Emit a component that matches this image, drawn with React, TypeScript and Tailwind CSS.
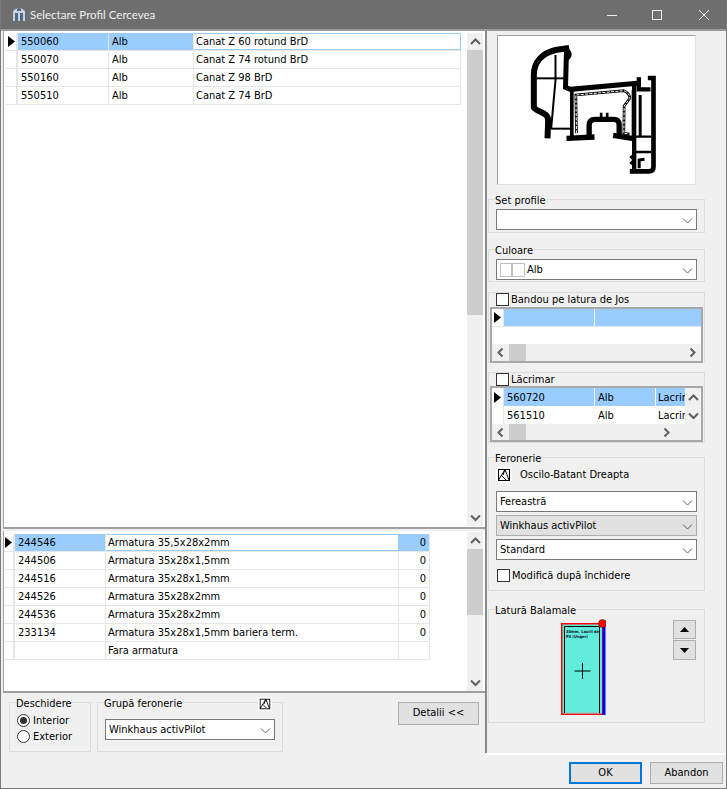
import type { ReactNode } from "react";

const font = { fontFamily: '"DejaVu Sans Condensed", "Noto Sans", sans-serif' };
const titleFont = { fontFamily: 'Lato, "Open Sans", sans-serif' };

const profiles = [
  { code: "550060", color: "Alb", name: "Canat Z 60 rotund BrD" },
  { code: "550070", color: "Alb", name: "Canat Z 74 rotund BrD" },
  { code: "550160", color: "Alb", name: "Canat Z 98 BrD" },
  { code: "550510", color: "Alb", name: "Canat Z 74 BrD" },
];

const reinforcements = [
  { code: "244546", name: "Armatura 35,5x28x2mm", qty: "0" },
  { code: "244506", name: "Armatura 35x28x1,5mm", qty: "0" },
  { code: "244516", name: "Armatura 35x28x1,5mm", qty: "0" },
  { code: "244526", name: "Armatura 35x28x2mm", qty: "0" },
  { code: "244536", name: "Armatura 35x28x2mm", qty: "0" },
  { code: "233134", name: "Armatura 35x28x1,5mm bariera term.", qty: "0" },
  { code: "", name: "Fara armatura", qty: "" },
];

function Chevron({ dir, bold }: { dir: "up" | "down" | "left" | "right"; bold?: boolean }) {
  const d = {
    down: "M1 3.5 L5.5 8 L10 3.5",
    up: "M1 8 L5.5 3.5 L10 8",
    left: "M7.5 1.5 L3.5 5.5 L7.5 9.5",
    right: "M3.5 1.5 L7.5 5.5 L3.5 9.5",
  }[dir];
  return (
    <svg width="11" height="11" viewBox="0 0 11 11" fill="none" stroke="#606060" strokeWidth={bold ? 2 : 1}>
      <path d={d} />
    </svg>
  );
}

function RowArrow() {
  return (
    <svg width="7" height="11" viewBox="0 0 7 11">
      <path d="M0 0 L7 5.5 L0 11 Z" fill="#000" />
    </svg>
  );
}

function Group({ title, className, children }: { title?: ReactNode; className: string; children?: ReactNode }) {
  return (
    <div className={`relative border border-[#dcdcdc] ${className}`}>
      {title && <div className="absolute -top-[7px] left-[6px] bg-[#f0f0f0] leading-[15px] whitespace-nowrap">{title}</div>}
      {children}
    </div>
  );
}

function Combo({ children, disabled, className }: { children?: ReactNode; disabled?: boolean; className: string }) {
  return (
    <div
      className={`h-[21px] flex items-center justify-between pl-[3px] pr-[1px] border ${
        disabled ? "bg-[#e1e1e1] border-[#adadad]" : "bg-white border-[#7a7a7a]"
      } ${className}`}
    >
      <div className="flex items-center pt-[2px]">{children}</div>
      <div className="mr-[1px] mt-[1px] w-[14px] flex justify-center">
        <Chevron dir="down" />
      </div>
    </div>
  );
}

function CheckLabel({ label, textClass }: { label: string; textClass?: string }) {
  return (
    <div className="flex items-center gap-[2px] leading-[13px]">
      <div className="w-[13px] h-[13px] border border-[#333] bg-white" />
      <span className={textClass}>{label}</span>
    </div>
  );
}

function HScroll({ arrowRightClass }: { arrowRightClass: string }) {
  return (
    <div className="h-[17px] bg-[#f0f0f0] flex items-center">
      <div className="w-[17px] flex justify-center">
        <Chevron dir="left" bold />
      </div>
      <div className="w-[17px] h-full bg-[#cdcdcd]" />
      <div className={`flex justify-center ${arrowRightClass}`}>
        <Chevron dir="right" bold />
      </div>
    </div>
  );
}

function VScroll({ thumbClass }: { thumbClass: string }) {
  return (
    <div className="w-[16px] h-full bg-[#f0f0f0] flex flex-col items-center">
      <div className="h-[17px] flex items-center">
        <Chevron dir="up" bold />
      </div>
      <div className={`w-full bg-[#cdcdcd] ${thumbClass}`} />
      <div className="flex-1" />
      <div className="h-[17px] flex items-center">
        <Chevron dir="down" bold />
      </div>
    </div>
  );
}

function ProfileDrawing() {
  return (
    <svg width="197" height="148" viewBox="33 108 590 444" fill="none" stroke="#000">
      {/* outer chamber */}
      <path d="M246 144 L205 150 C165 160 140 185 140 225 L140 322 C148 337 184 335 183 362 L181 415" strokeWidth="18" />
      <path d="M238 150 L235 262 L250 268 L450 250" strokeWidth="15" />
      <path d="M226 150 A11 11 0 0 1 242 176" strokeWidth="9" />
      <path d="M205 165 L205 240 L192 385" strokeWidth="6" />
      <path d="M148 235 L235 235" strokeWidth="6" />
      <path d="M188 386 L250 386" strokeWidth="6" />
      {/* middle */}
      <path d="M254 270 L254 410" strokeWidth="11" />
      <path d="M238 415 L322 411" strokeWidth="16" />
      <path d="M378 406 L440 416" strokeWidth="16" />
      <path d="M306 408 L306 376 Q306 358 324 358 L380 358 Q396 358 396 376 L396 404" strokeWidth="16" />
      <path d="M342 356 L342 338 M360 356 L360 338" strokeWidth="8" />
      {/* steel */}
      <path d="M268 400 L266 285 L410 272 Q428 280 428 295 L411 318 L410 400 L428 402" strokeWidth="8" />
      <path d="M268 400 L266 285 L410 272 Q428 280 428 295 L411 318 L410 400 L428 402" stroke="#fff" strokeWidth="3" strokeDasharray="9 4" />
      <path d="M436 270 L436 410" strokeWidth="5" />
      {/* right frame */}
      <path d="M441 248 L441 515" strokeWidth="13" />
      <path d="M455 232 L455 268 L490 268" strokeWidth="13" />
      <path d="M482 234 L499 234 L499 500 Q499 514 485 514 L428 514" strokeWidth="14" />
      <path d="M459 285 L459 410" strokeWidth="9" />
      <path d="M446 410 L492 410 M446 456 L492 456" strokeWidth="7" />
      <path d="M430 468 L441 480 L430 492" strokeWidth="9" />
      <path d="M456 505 L456 480 L472 478" strokeWidth="9" />
    </svg>
  );
}

function HingeDrawing() {
  return (
    <svg width="46" height="96" viewBox="0 0 46 96">
      <rect x="1.75" y="4.75" width="41" height="90.5" fill="#62ecdc" stroke="#f00" strokeWidth="1.5" />
      <rect x="42.5" y="4" width="3" height="92" fill="#0000f0" />
      <path d="M4.5 94 V7.5 H39.5 V94" fill="none" stroke="#000" />
      <path d="M5 94 H39" stroke="#b0b0b0" />
      <path d="M22.5 44 V60 M14.5 52 H30.5" stroke="#000" />
      <text x="6" y="14" fontSize="4" fontWeight="700" fill="#113">
        30mm, Lauril de
      </text>
      <text x="6" y="19" fontSize="4" fontWeight="700" fill="#113">
        Pil (Unger)
      </text>
      <circle cx="42.5" cy="4.5" r="4" fill="#f00" stroke="#600" strokeWidth="0.5" />
    </svg>
  );
}

function SashIcon() {
  return (
    <svg width="16" height="16" viewBox="0 0 16 16" fill="none" stroke="#000">
      <rect width="16" height="16" fill="#fff" stroke="none" />
      <rect x="2.5" y="2.5" width="11" height="11" />
      <path d="M2.5 13 L9 2.5 L13 13 M5 8 L10 13 M9 2.5 L7 8" />
    </svg>
  );
}

function AppIcon() {
  return (
    <svg width="14" height="17" viewBox="0 0 14 17">
      <path d="M1 15 L1 5 Q7 -1 13 5 L13 15 Z" fill="#c9d2dc" />
      <path d="M3 15 L3 7 H6 V15 Z M8 15 L8 7 H11 V15 Z" fill="#4a6a90" />
      <path d="M5 3 Q7 1 9 3 V5 H5 Z" fill="#4a6a90" />
    </svg>
  );
}

export default function App() {
  return (
    <div style={font} className="w-[727px] h-[789px] bg-[#f0f0f0] text-[11px] text-black flex flex-col border-x border-b border-[#7a7a7a] overflow-hidden">
      {/* title bar */}
      <div className="h-[31px] shrink-0 -mx-px bg-[#6e6e6e] border-b-2 border-[#9a9a9a] flex items-center text-[#eeeeee] text-[11.5px]">
        <div className="ml-[12px] w-[14px] flex justify-center">
          <AppIcon />
        </div>
        <span style={titleFont} className="ml-[4px]">
          Selectare Profil Cercevea
        </span>
        <div className="ml-auto flex items-center">
          <svg width="46" height="12" viewBox="0 0 46 12" stroke="#eee" fill="none">
            <path d="M18 6.5 H28" />
          </svg>
          <svg width="46" height="12" viewBox="0 0 46 12" stroke="#eee" fill="none">
            <rect x="17.5" y="1.5" width="9" height="9" />
          </svg>
          <svg width="46" height="12" viewBox="0 0 46 12" stroke="#eee" fill="none">
            <path d="M18 1 L28 11 M28 1 L18 11" />
          </svg>
        </div>
      </div>

      <div className="h-[722px] shrink-0 flex">
        {/* left */}
        <div className="w-[486px] shrink-0 flex flex-col pl-[2px] border-r-2 border-[#8a8a8a]">
          {/* profile list */}
          <div className="h-[498px] shrink-0 bg-white border-b-2 border-l border-[#a0a0a0] flex">
            <div className="w-[464px] pt-[2px] pl-[2px]">
              {profiles.map((p, i) => (
                <div key={p.code} className="w-fit h-[18px] flex border-b border-[#e6e6e6]">
                  <div className="w-[12px] bg-white border-r-2 border-[#e6e6e6] flex items-center justify-center">{i === 0 && <RowArrow />}</div>
                  <div className={`w-[91px] pl-[3px] border-r border-[#e6e6e6] leading-[18px] ${i === 0 ? "bg-[#99ccff]" : ""}`}>{p.code}</div>
                  <div className={`w-[85px] pl-[3px] border-r border-[#e6e6e6] leading-[18px] ${i === 0 ? "bg-[#99ccff]" : ""}`}>{p.color}</div>
                  <div className={`w-[267px] pl-[2px] ${i === 0 ? "border-y border-r border-[#99ccff] leading-[16px]" : "border-r border-[#e6e6e6] leading-[18px]"}`}>{p.name}</div>
                </div>
              ))}
            </div>
            <div className="flex-1" />
            <div className="pt-[2px] pb-[1px] pr-[2px] h-full">
              <VScroll thumbClass="h-[265px]" />
            </div>
          </div>

          {/* reinforcement list */}
          <div className="h-[162px] shrink-0 mt-[2px] bg-white border-b-2 border-l border-[#a0a0a0] flex">
            <div className="w-[464px] pt-[3px]">
              {reinforcements.map((r, i) => (
                <div key={i} className="w-fit h-[18px] flex border-b border-[#e6e6e6]">
                  <div className="w-[11px] border-r-2 border-[#e6e6e6] flex items-center justify-center">{i === 0 && <RowArrow />}</div>
                  <div className={`w-[91px] pl-[3px] border-r border-[#e6e6e6] leading-[18px] ${i === 0 ? "bg-[#99ccff]" : ""}`}>{r.code}</div>
                  <div className={`w-[293px] pl-[2px] ${i === 0 ? "border-y border-r border-[#99ccff] leading-[16px]" : "border-r border-[#e6e6e6] leading-[18px]"}`}>{r.name}</div>
                  <div className={`w-[31px] pr-[3px] text-right leading-[18px] border-r border-[#e6e6e6] ${i === 0 ? "bg-[#99ccff]" : ""}`}>{r.qty}</div>
                </div>
              ))}
            </div>
            <div className="flex-1" />
            <div className="pt-[1px] pr-[2px] h-full">
              <VScroll thumbClass="h-[66px]" />
            </div>
          </div>

          {/* options */}
          <div className="flex-1 flex items-start pl-[6px] pt-[9px]">
            <Group title="Deschidere" className="w-[82px] h-[50px] pt-[9px] pl-[7px]">
              {["Interior", "Exterior"].map((label, i) => (
                <div key={label} className="h-[16px] flex items-center gap-[3px]">
                  <div className="w-[13px] h-[13px] rounded-full border border-[#333] bg-white flex items-center justify-center">
                    {i === 0 && <div className="w-[7px] h-[7px] rounded-full bg-[#333]" />}
                  </div>
                  <span className="pt-[2px]">{label}</span>
                </div>
              ))}
            </Group>
            <Group title="Grupă feronerie" className="relative w-[186px] h-[50px] ml-[6px] pl-[7px] pt-[16px]">
              <div className="absolute -top-[7px] right-[9px] scale-[0.875]">
                <SashIcon />
              </div>
              <Combo className="w-[170px]">Winkhaus activPilot</Combo>
            </Group>
            <button className="ml-[115px] w-[81px] h-[23px] bg-[#e1e1e1] border border-[#adadad]">Detalii &lt;&lt;</button>
          </div>
        </div>

        {/* right */}
        <div className="flex-1 min-w-0 pl-[1px] pr-[21px] pt-[4px]">
          <div className="ml-[9px] w-[199px] h-[150px] bg-white border border-l-[#a0a0a0] border-t-[#a0a0a0] border-r-[#e0e0e0] border-b-[#e0e0e0]">
            <ProfileDrawing />
          </div>

          <Group title="Set profile" className="mt-[14px] h-[34px] pl-[7px] pt-[9px]">
            <Combo className="w-[201px]" />
          </Group>

          <Group title="Culoare" className="mt-[16px] h-[33px] pl-[7px] pt-[9px]">
            <Combo className="w-[201px]">
              <div className="w-[25px] h-[14px] -mt-[2px] border border-[#c0c0c0] flex mr-[2px]">
                <div className="w-[12px] border-r-2 border-[#c0c0c0]" />
              </div>
              Alb
            </Combo>
          </Group>

          <Group className="mt-[10px] h-[71px] pl-[1px] pt-[14px]">
            <div className="absolute -top-[1px] left-[7px]">
              <CheckLabel label="Bandou pe latura de Jos" textClass="pt-[1px]" />
            </div>
            <div className="w-[213px] h-[56px] border-2 border-[#a8a8a8] bg-white flex flex-col">
              <div className="h-[18px] flex border-b border-[#e6e6e6]">
                <div className="w-[12px] flex items-center justify-center border-r border-[#e6e6e6]">
                  <RowArrow />
                </div>
                <div className="w-[91px] bg-[#99ccff] border-r border-white" />
                <div className="flex-1 bg-[#99ccff]" />
              </div>
              <div className="flex-1" />
              <HScroll arrowRightClass="ml-[158px] w-[17px]" />
            </div>
          </Group>

          <Group className="mt-[9px] h-[71px] pl-[1px] pt-[13px]">
            <div className="absolute -top-[1px] left-[7px]">
              <CheckLabel label="Lăcrimar" textClass="pt-[1px]" />
            </div>
            <div className="w-[213px] h-[56px] border-2 border-[#a8a8a8] bg-white flex flex-col">
              <div className="flex-1 flex">
                <div className="w-[193px]">
                  {[
                    { code: "560720", color: "Alb", name: "Lacrimar" },
                    { code: "561510", color: "Alb", name: "Lacrimar" },
                  ].map((r, i) => (
                    <div key={r.code} className="h-[18px] flex overflow-hidden whitespace-nowrap">
                      <div className="w-[12px] shrink-0 flex items-center justify-center border-r border-[#e6e6e6]">{i === 0 && <RowArrow />}</div>
                      <div className={`w-[91px] shrink-0 pl-[3px] leading-[19px] border-r border-white ${i === 0 ? "bg-[#99ccff]" : ""}`}>{r.code}</div>
                      <div className={`w-[61px] shrink-0 pl-[3px] leading-[19px] border-r border-white ${i === 0 ? "bg-[#99ccff]" : ""}`}>{r.color}</div>
                      <div className={`flex-1 overflow-hidden pl-[2px] leading-[19px] ${i === 0 ? "bg-[#99ccff]" : ""}`}>{r.name}</div>
                    </div>
                  ))}
                </div>
                <div className="flex-1 bg-[#f0f0f0] flex flex-col items-center">
                  <div className="h-[18px] flex items-center">
                    <Chevron dir="up" bold />
                  </div>
                  <div className="h-[18px] flex items-center">
                    <Chevron dir="down" bold />
                  </div>
                </div>
              </div>
              <HScroll arrowRightClass="ml-[132px] w-[17px]" />
            </div>
          </Group>

          <Group title="Feronerie" className="mt-[14px] h-[134px] pl-[7px]">
            <div className="h-[33px] flex items-center">
              <SashIcon />
              <span className="ml-[8px] pt-[2px]">Oscilo-Batant Dreapta</span>
            </div>
            <div className="flex flex-col gap-[3px]">
              <Combo className="w-[201px]">Fereastră</Combo>
              <Combo disabled className="w-[201px]">
                Winkhaus activPilot
              </Combo>
              <Combo className="w-[201px]">Standard</Combo>
            </div>
            <div className="mt-[9px] pl-[1px]">
              <CheckLabel label="Modifică după închidere" />
            </div>
          </Group>

          <Group title="Latură Balamale" className="mt-[18px] h-[114px] flex">
            <div className="ml-[71px] mt-[9px]">
              <HingeDrawing />
            </div>
            <div className="ml-[67px] mt-[10px] flex flex-col gap-[1px]">
              <button className="w-[23px] h-[19px] bg-[#e1e1e1] border border-[#adadad] flex items-center justify-center">
                <svg width="9" height="5" viewBox="0 0 9 5">
                  <path d="M4.5 0 L9 5 H0 Z" fill="#000" />
                </svg>
              </button>
              <button className="w-[23px] h-[20px] bg-[#e1e1e1] border border-[#adadad] flex items-center justify-center">
                <svg width="9" height="5" viewBox="0 0 9 5">
                  <path d="M0 0 H9 L4.5 5 Z" fill="#000" />
                </svg>
              </button>
            </div>
          </Group>
        </div>
      </div>

      {/* footer */}
      <div className="flex-1 flex">
        <div className="w-[485px] shrink-0" />
        <div className="flex-1 border-t-2 border-white flex items-start justify-end gap-[8px] pt-[7px] pr-[3px]">
          <button className="w-[73px] h-[22px] pt-[1px] bg-[#e1e1e1] border-2 border-[#0078d7]">OK</button>
          <button className="w-[73px] h-[22px] pt-[1px] bg-[#e1e1e1] border border-[#adadad]">Abandon</button>
        </div>
      </div>
    </div>
  );
}
